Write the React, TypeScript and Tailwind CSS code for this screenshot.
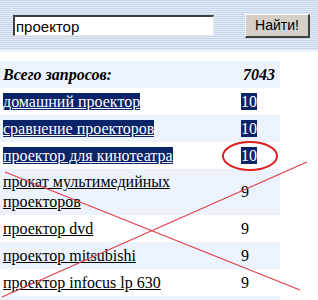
const rows: Array<{ q: string; n: string; hl?: boolean }> = [
  { q: 'домашний проектор', n: '10', hl: true },
  { q: 'сравнение проекторов', n: '10', hl: true },
  { q: 'проектор для кинотеатра', n: '10', hl: true },
  { q: 'прокат мультимедийных проекторов', n: '9' },
  { q: 'проектор dvd', n: '9' },
  { q: 'проектор mitsubishi', n: '9' },
  { q: 'проектор infocus lp 630', n: '9' },
]

export default function App() {
  return (
    <div className="relative w-[318px] h-[300px] overflow-hidden bg-white">
      {/* search bar */}
      <div className="h-[52px] flex items-start bg-[repeating-linear-gradient(to_bottom,#c7d6ea_0px,#c7d6ea_1px,#e3ebf6_1px,#e3ebf6_2px)] border-b-2 border-[#eef3fa]">
        <div className="mt-[15px] ml-[13px] w-[201px] h-[21px] bg-white border-t-2 border-l-2 border-t-[#404040] border-l-[#404040] border-b border-r border-b-[#e8e8e8] border-r-[#e8e8e8] flex items-center pl-[1px] font-['Liberation_Sans',Arial,sans-serif] text-[15px] text-black leading-none">
          проектор
        </div>
        <div className="mt-[14px] ml-[31px] w-[65px] h-[24px] bg-[#d4d0c8] border-t border-l border-t-white border-l-white border-b-2 border-r-2 border-b-[#404040] border-r-[#404040] flex items-center justify-center font-['Liberation_Sans',Arial,sans-serif] text-[14px] text-black">
          Найти!
        </div>
      </div>

      {/* stats table */}
      <div className="mt-[9px] w-[280px] font-['Liberation_Serif','Times_New_Roman',serif] text-[16px] text-black">
        <div className="flex items-center h-[27px] bg-[#edf3fc] font-bold italic">
          <div className="w-[240px] pl-[3px]">Всего запросов:</div>
          <div className="pl-[3px]">7043</div>
        </div>
        {rows.map((r, i) => (
          <div
            key={i}
            className={`flex items-center py-[3px] leading-[20px] min-h-[27px] ${i % 2 === 1 ? 'bg-[#edf3fc]' : 'bg-white'}`}
          >
            <div className="w-[240px] pl-[3px] pr-[50px]">
              <a className={`underline ${r.hl ? 'bg-[#0a246a] text-white' : 'text-black'}`}>{r.q}</a>
            </div>
            <div className="pl-[1px]">
              <span className={r.hl ? 'bg-[#0a246a] text-white' : ''}>{r.n}</span>
            </div>
          </div>
        ))}
        <div className="h-[27px] bg-[#edf3fc]" />
      </div>

      {/* red annotations */}
      <svg className="absolute inset-0 pointer-events-none" width="318" height="300" viewBox="0 0 318 300">
        <ellipse cx="250" cy="156" rx="27" ry="14" fill="none" stroke="#dc1e1e" strokeWidth="2" />
        <line x1="5" y1="172" x2="300" y2="290" stroke="#e2404a" strokeWidth="1.2" />
        <line x1="307" y1="162" x2="2" y2="297" stroke="#e2404a" strokeWidth="1.2" />
      </svg>
    </div>
  )
}
